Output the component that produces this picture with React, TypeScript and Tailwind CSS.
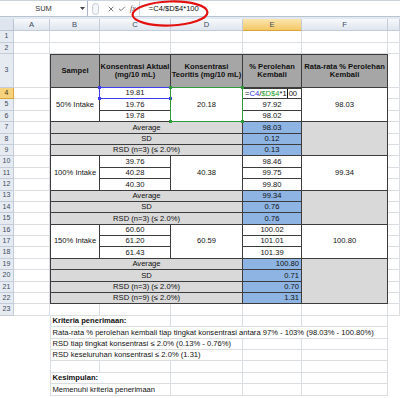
import React from 'react';
import clsx from 'clsx';
import { X, Check } from 'lucide-react';

type Group = {
  row: number;
  label: string;
  actual: string[];
  theory: string;
  rec: string[];
  mean: string;
};

const groups: Group[] = [
  { row: 4, label: '50% Intake', actual: ['19.81', '19.76', '19.78'], theory: '20.18', rec: ['', '97.92', '98.02'], mean: '98.03' },
  { row: 10, label: '100% Intake', actual: ['39.76', '40.28', '40.30'], theory: '40.38', rec: ['98.46', '99.75', '99.80'], mean: '99.34' },
  { row: 16, label: '150% Intake', actual: ['60.60', '61.20', '61.43'], theory: '60.59', rec: ['100.02', '101.01', '101.39'], mean: '100.80' },
];

const groupStats = [
  { row: 7, values: ['98.03', '0.12', '0.13'] },
  { row: 13, values: ['99.34', '0.76', '0.76'] },
];

const finalStats = [
  { label: 'Average', value: '100.80' },
  { label: 'SD', value: '0.71' },
  { label: 'RSD (n=3) (≤ 2.0%)', value: '0.70' },
  { label: 'RSD (n=9) (≤ 2.0%)', value: '1.31' },
];

const statLabels = ['Average', 'SD', 'RSD (n=3) (≤ 2.0%)'];

const notes = [
  { row: 24, text: 'Kriteria penerimaan:', bold: true },
  { row: 25, text: 'Rata-rata % perolehan kembali tiap tingkat konsentrasi antara 97% - 103% (98.03% - 100.80%)' },
  { row: 26, text: 'RSD tiap tingkat konsentrasi ≤ 2.0% (0.13% - 0.76%)' },
  { row: 27, text: 'RSD keseluruhan konsentrasi ≤ 2.0% (1.31)' },
  { row: 29, text: 'Kesimpulan:', bold: true },
  { row: 30, text: 'Memenuhi kriteria penerimaan' },
];

const letters = ['A', 'B', 'C', 'D', 'E', 'F', ''];

// excel row r sits on grid row r + 1 (grid row 1 = column headers)
function at(r: number, c: number, rs = 1, cs = 1): React.CSSProperties {
  return { gridRow: `${r + 1} / span ${rs}`, gridColumn: `${c} / span ${cs}` };
}

function Cell({ r, c, rs = 1, cs = 1, className, children }: { r: number; c: number; rs?: number; cs?: number; className?: string; children?: React.ReactNode }) {
  return (
    <div
      style={at(r, c, rs, cs)}
      className={clsx(
        'flex items-center justify-center whitespace-nowrap border-r border-b border-[#3c3c3c] leading-none text-[#111]',
        c === 3 && 'border-l',
        r === 3 && 'border-t',
        className
      )}
    >
      {children}
    </div>
  );
}

function FormulaBar() {
  return (
    <div className="h-[19px] border-t border-[#c9d2dd] bg-[#e3e9f1] pb-[2px]">
      <div className="flex h-[16px] items-center border-b border-[#b8c3d1] bg-white">
        <div className="relative flex h-full w-[88px] items-center justify-center border-r border-[#aab6c5]">
          <span className="text-[7.5px] text-[#333]">SUM</span>
          <svg className="absolute right-[2px] top-[6px]" width="5" height="3" viewBox="0 0 5 3">
            <path d="M0 0h5L2.5 3z" fill="#444" />
          </svg>
        </div>
        <div className="ml-[4px] h-[12px] w-[7px] rounded-full border border-[#c3ccd8] bg-[#f4f6f9]" />
        <X size={8} strokeWidth={2.4} className="ml-[8px] text-[#555]" />
        <Check size={8} strokeWidth={2.4} className="ml-[3px] text-[#555]" />
        <span className="ml-[4px] font-['Liberation_Serif',serif] text-[8px] italic text-[#555]">fx</span>
        <div className="ml-[3px] flex h-full flex-1 items-center border-l border-[#d0d7e1] pl-[9px] text-[7.6px] text-[#111]">=C4/$D$4*100</div>
      </div>
    </div>
  );
}

function Corner({ className }: { className: string }) {
  return <span className={clsx('absolute h-[3px] w-[3px]', className)} />;
}

export default function App() {
  return (
    <div className="relative h-[398px] w-[400px] overflow-hidden bg-white font-['Liberation_Sans',Arial,sans-serif]">
      <FormulaBar />

      <div className="grid grid-cols-[14px_36px_50px_71px_72px_59px_86px_12px] grid-rows-[12px_11.5px_11.5px_34px_repeat(27,11.4px)] text-[7.6px]">
        {/* headers */}
        <div style={at(0, 1)} className="border-r border-b border-[#b9c4d2] bg-[#dfe5ee]" />
        {letters.map((l, i) => (
          <div
            key={i}
            style={at(0, i + 2)}
            className={clsx(
              'flex items-center justify-center border-r border-b border-[#c3ccd8] text-[#3c4a5c]',
              l === 'E' ? 'bg-gradient-to-b from-[#fbe6ae] to-[#f3c764] border-b-[#d9a53c]' : 'bg-gradient-to-b from-[#f7f9fc] to-[#dfe5ee]'
            )}
          >
            {l}
          </div>
        ))}
        {Array.from({ length: 23 }, (_, i) => i + 1).map((r) => (
          <div
            key={r}
            style={at(r, 1)}
            className={clsx(
              'flex items-center justify-center border-r border-b text-[7px]',
              r === 4 ? 'border-[#d9a53c] bg-[#f6d27c] text-[#4a3a10]' : 'border-[#c3ccd8] bg-[#e6ebf2] text-[#3c4a5c]'
            )}
          >
            {r}
          </div>
        ))}

        {/* grid lines */}
        {Array.from({ length: 23 }, (_, i) => i + 1).flatMap((r) =>
          [2, 3, 4, 5, 6, 7, 8].map((c) => <div key={`g${r}-${c}`} style={at(r, c)} className="border-r border-b border-[#dadde2]" />)
        )}
        {Array.from({ length: 7 }, (_, i) => i + 24).flatMap((r) =>
          [3, 4, 5, 6, 7].map((c) => (
            <div key={`g${r}-${c}`} style={at(r, c)} className={clsx('border-r border-b border-[#dadde2]', c === 3 && 'border-l')} />
          ))
        )}

        {/* table header */}
        <Cell r={3} c={3} className="bg-[#a6a6a6] font-bold">Sampel</Cell>
        <Cell r={3} c={4} className="whitespace-normal bg-[#a6a6a6] text-center font-bold leading-[11px]">Konsentrasi Aktual<br />(mg/10 mL)</Cell>
        <Cell r={3} c={5} className="whitespace-normal bg-[#a6a6a6] text-center font-bold leading-[11px]">Konsentrasi<br />Teoritis (mg/10 mL)</Cell>
        <Cell r={3} c={6} className="whitespace-normal bg-[#a6a6a6] text-center font-bold leading-[11px]">% Perolehan<br />Kembali</Cell>
        <Cell r={3} c={7} className="whitespace-normal bg-[#a6a6a6] text-center font-bold leading-[11px]">Rata-rata % Perolehan<br />Kembali</Cell>

        {groups.map((g) => (
          <React.Fragment key={g.row}>
            <Cell r={g.row} c={3} rs={3} className="bg-white">{g.label}</Cell>
            {g.actual.map((v, i) => (
              <Cell key={`c${i}`} r={g.row + i} c={4} className="bg-white">{v}</Cell>
            ))}
            <Cell r={g.row} c={5} rs={3} className="bg-white">{g.theory}</Cell>
            {g.rec.map((v, i) =>
              g.row === 4 && i === 0 ? (
                <Cell key="e4" r={4} c={6} className="justify-start border-t bg-white pl-[2px]">
                  <span>=</span>
                  <span className="text-[#3535e8]">C4</span>
                  <span>/</span>
                  <span className="text-[#1f9a2b]">$D$4</span>
                  <span>*1</span>
                  <span className="mx-[0.5px] inline-block h-[9px] w-px bg-[#111]" />
                  <span>00</span>
                </Cell>
              ) : (
                <Cell key={`e${i}`} r={g.row + i} c={6} className="bg-white">{v}</Cell>
              )
            )}
            <Cell r={g.row} c={7} rs={3} className="bg-white">{g.mean}</Cell>
          </React.Fragment>
        ))}

        {groupStats.map((s) => (
          <React.Fragment key={s.row}>
            {s.values.map((v, i) => (
              <React.Fragment key={i}>
                <Cell r={s.row + i} c={3} cs={3} className="bg-[#d9d9d9]">{statLabels[i]}</Cell>
                <Cell r={s.row + i} c={6} className="bg-[#8db4e2]">{v}</Cell>
              </React.Fragment>
            ))}
            <Cell r={s.row} c={7} rs={3} className="bg-[#d9d9d9]" />
          </React.Fragment>
        ))}

        {finalStats.map((s, i) => (
          <React.Fragment key={s.label + i}>
            <Cell r={19 + i} c={3} cs={3} className="bg-[#d9d9d9]">{s.label}</Cell>
            <Cell r={19 + i} c={6} className="justify-end bg-[#8db4e2] pr-[2px]">{s.value}</Cell>
          </React.Fragment>
        ))}
        <Cell r={19} c={7} rs={4} className="bg-[#d9d9d9]" />

        {/* formula reference ranges */}
        <div style={at(4, 4)} className="relative -mt-px -ml-px border border-[#3d3df0]">
          <Corner className="-left-[2px] -top-[2px] bg-[#3d3df0]" />
          <Corner className="-right-[2px] -top-[2px] bg-[#3d3df0]" />
          <Corner className="-bottom-[2px] -left-[2px] bg-[#3d3df0]" />
          <Corner className="-bottom-[2px] -right-[2px] bg-[#3d3df0]" />
        </div>
        <div style={at(4, 5, 3)} className="relative -mt-px -ml-px border border-[#2e9a3a]">
          <Corner className="-left-[2px] -top-[2px] bg-[#2e9a3a]" />
          <Corner className="-right-[2px] -top-[2px] bg-[#2e9a3a]" />
          <Corner className="-bottom-[2px] -left-[2px] bg-[#2e9a3a]" />
          <Corner className="-bottom-[2px] -right-[2px] bg-[#2e9a3a]" />
        </div>

        {/* notes below the table */}
        {notes.map((n) => (
          <div key={n.row} style={at(n.row, 3, 1, 5)} className="flex items-stretch pb-px pl-px">
            <span className={clsx('flex items-center bg-white px-[1.5px] leading-none whitespace-nowrap text-[#111]', n.bold && 'font-bold')}>{n.text}</span>
          </div>
        ))}
      </div>

      <svg className="pointer-events-none absolute left-[130px] top-0" width="82" height="28" viewBox="0 0 82 28">
        <ellipse cx="40" cy="13.5" rx="37.5" ry="12" transform="rotate(-2 40 13.5)" fill="none" stroke="#e31010" strokeWidth="2.2" />
      </svg>
    </div>
  );
}
